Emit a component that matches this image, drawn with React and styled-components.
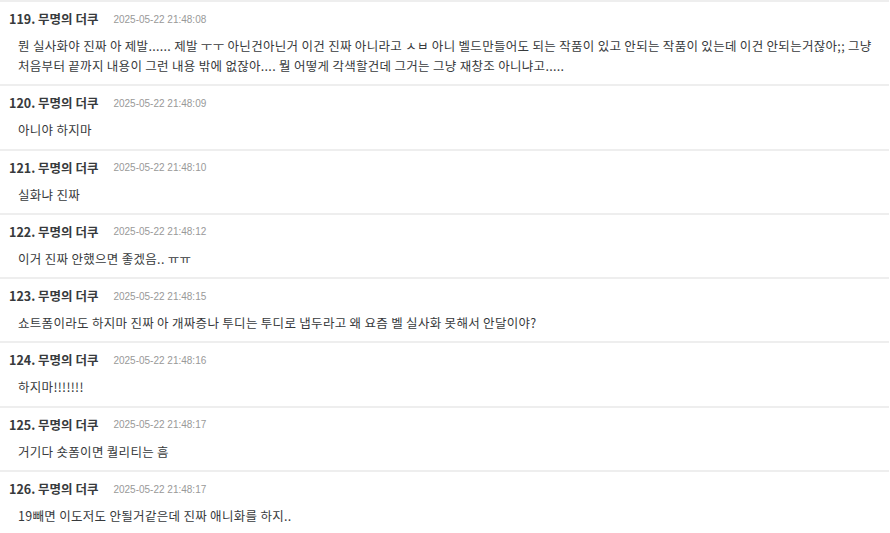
import React from "react";
import styled, { createGlobalStyle } from "styled-components";

const GlobalStyle = createGlobalStyle`
  html, body {
    margin: 0;
    padding: 0;
    background: #fff;
    overflow: hidden;
  }
  body {
    font-family: "Noto Sans CJK KR", "Noto Sans", sans-serif;
  }
`;

// --- STYLES ---
const List = styled.ul`
  list-style: none;
  margin: 0;
  padding: 0;
  width: 889px;
  border-top: 2px solid #eee;
`;

const Item = styled.li`
  padding: 8px 9px 8.3px 9px;
  border-bottom: 2px solid #eee;
`;

const Header = styled.div`
  display: flex;
  align-items: center;
  gap: 15px;
  height: 18px;
  line-height: 18px;
`;

const Name = styled.span`
  font-size: 12.5px;
  font-weight: 700;
  color: #373a3c;
`;

const Date = styled.span`
  font-family: "Liberation Sans", Arial, sans-serif;
  font-size: 10px;
  color: #999;
  padding-top: 1px;
`;

const Body = styled.div`
  margin-top: 8px;
  padding-left: 9px;
  padding-right: 4px;
  font-size: 12.5px;
  letter-spacing: 0.3px;
  line-height: 20px;
  color: #373a3c;
  word-break: keep-all;
`;

const comments = [
  {
    no: 119,
    time: "21:48:08",
    text: "뭔 실사화야 진짜 아 제발...... 제발 ㅜㅜ 아닌건아닌거 이건 진짜 아니라고 ㅅㅂ 아니 벨드만들어도 되는 작품이 있고 안되는 작품이 있는데 이건 안되는거잖아;; 그냥 처음부터 끝까지 내용이 그런 내용 밖에 없잖아.... 뭘 어떻게 각색할건데 그거는 그냥 재창조 아니냐고.....",
  },
  { no: 120, time: "21:48:09", text: "아니야 하지마" },
  { no: 121, time: "21:48:10", text: "실화냐 진짜" },
  { no: 122, time: "21:48:12", text: "이거 진짜 안했으면 좋겠음.. ㅠㅠ" },
  {
    no: 123,
    time: "21:48:15",
    text: "쇼트폼이라도 하지마 진짜 아 개짜증나 투디는 투디로 냅두라고 왜 요즘 벨 실사화 못해서 안달이야?",
  },
  { no: 124, time: "21:48:16", text: "하지마!!!!!!!" },
  { no: 125, time: "21:48:17", text: "거기다 숏폼이면 퀄리티는 흠" },
  { no: 126, time: "21:48:17", text: "19빼면 이도저도 안될거같은데 진짜 애니화를 하지.." },
];

const App = () => {
  return (
    <>
      <GlobalStyle />
      <List>
        {comments.map((c) => (
          <Item key={c.no}>
            <Header>
              <Name>{c.no}. 무명의 더쿠</Name>
              <Date>2025-05-22 {c.time}</Date>
            </Header>
            <Body>{c.text}</Body>
          </Item>
        ))}
      </List>
    </>
  );
};

export default App;
